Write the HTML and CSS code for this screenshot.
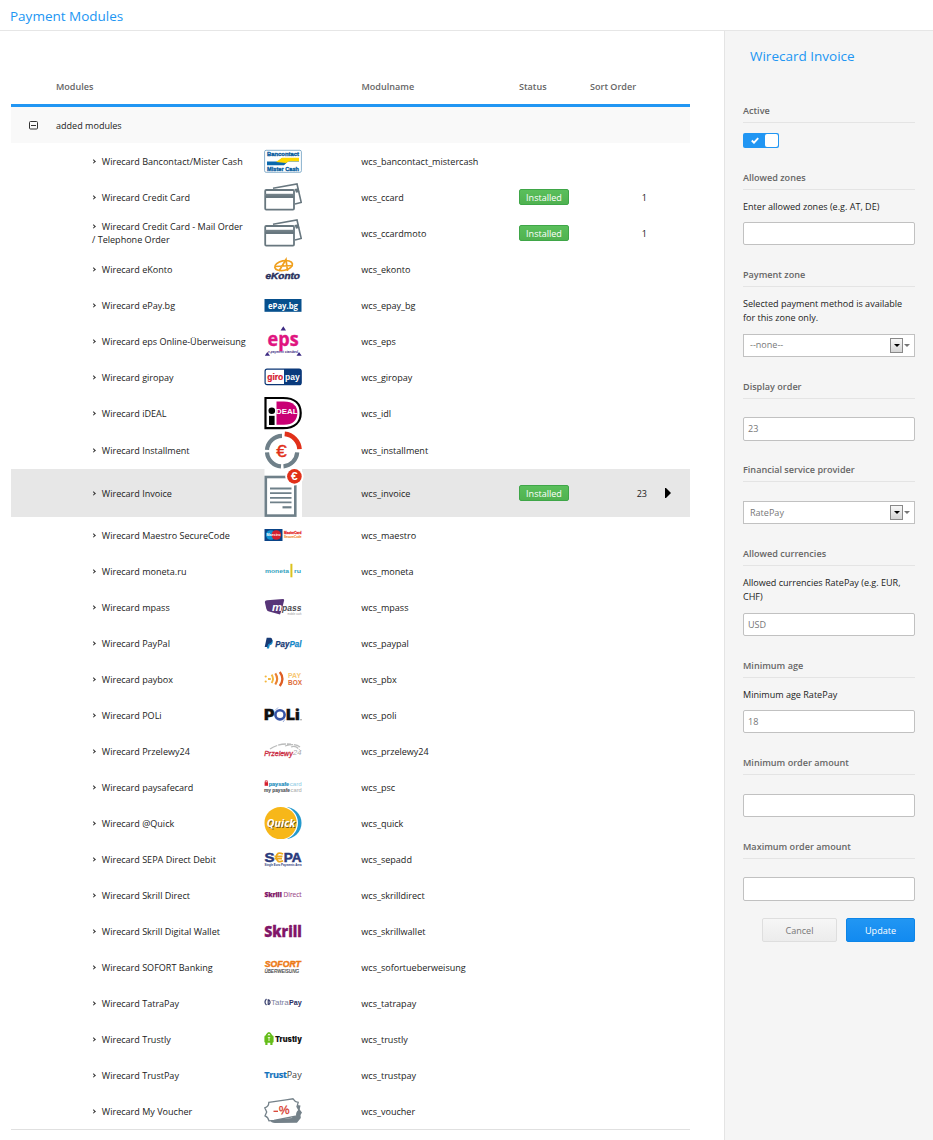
FILE: index.html
```html
<!DOCTYPE html>
<html lang="en">
<head>
<meta charset="utf-8">
<title>Payment Modules</title>
<link rel="stylesheet" href="styles.css">
</head>
<body>
<svg class="defs" width="0" height="0">
  <symbol id="cards" viewBox="0 0 38 36">
    <path d="M9 9.2 33 5 37.2 23.4 31 25" fill="none" stroke="#68777f" stroke-width="1.6"/>
    <path d="M30.5 10 34.5 9.3 35.4 13 32 13.7z" fill="#68777f"/>
    <rect x="1.2" y="11" width="28.8" height="19.6" rx="1" fill="#fff" stroke="#68777f" stroke-width="1.8"/>
    <path d="M1 14.8H30V19H1z" fill="#68777f"/><path d="M1 15.9H30" stroke="#8f9ba1" stroke-width=".5"/>
  </symbol>
</svg>
<header class="page-head"><h1>Payment Modules</h1></header>
<div class="layout">
<main class="main">
  <div class="row head"><span class="c-name">Modules</span><span class="c-mod">Modulname</span><span>Status</span><span>Sort Order</span></div>
  <div class="row group"><svg class="minus" viewBox="0 0 9 9"><rect x=".5" y=".5" width="8" height="7.5" rx="1" fill="none" stroke="#333"/><path d="M2 4.5H7" stroke="#333"/></svg><span>added modules</span></div>

  <div class="row"><span class="name">Wirecard Bancontact/Mister Cash</span>
    <svg class="logo" viewBox="0 0 38 36"><rect x=".6" y="7.3" width="36.8" height="22" rx="1.5" fill="#fff" stroke="#7aa7c6" stroke-width=".9"/><g class="bold" font-size="5.9" fill="#0a5c9e" stroke="#0a5c9e" stroke-width=".35"><text x="3" y="13.3" textLength="32" lengthAdjust="spacingAndGlyphs">Bancontact</text><text x="3" y="27.7" textLength="32" lengthAdjust="spacingAndGlyphs">Mister Cash</text></g><path d="M3 18.5H14L18 15H35V18.4H24L20 22.2H3z" fill="#0b68ac"/><path d="M12 19 18 14.8H35V18.2H25L22 20z" fill="#ffd800"/></svg><span class="mod">wcs_bancontact_mistercash</span></div>
  <div class="row"><span class="name">Wirecard Credit Card</span>
    <svg class="logo"><use href="#cards"/></svg><span class="mod">wcs_ccard</span><span class="status"><b class="badge">Installed</b></span><span class="sort">1</span></div>
  <div class="row"><span class="name">Wirecard Credit Card - Mail Order / Telephone Order</span>
    <svg class="logo"><use href="#cards"/></svg><span class="mod">wcs_ccardmoto</span><span class="status"><b class="badge">Installed</b></span><span class="sort">1</span></div>
  <div class="row"><span class="name">Wirecard eKonto</span>
    <svg class="logo" viewBox="0 0 38 36"><g fill="none" stroke="#f0a01e" stroke-width="1.7"><ellipse cx="19.5" cy="14.5" rx="9" ry="4.8" transform="rotate(-12 20 14)"/><path d="M15 20 22 8.6 23.5 20M11 15.5 29 14.5"/></g><text class="bold it" x="1.5" y="27.6" textLength="34.5" lengthAdjust="spacingAndGlyphs" font-size="8.6" fill="#272f5c" stroke="#272f5c" stroke-width=".4">eKonto</text></svg><span class="mod">wcs_ekonto</span></div>
  <div class="row"><span class="name">Wirecard ePay.bg</span>
    <svg class="logo" viewBox="0 0 38 36"><rect x=".5" y="12" width="37" height="12.8" fill="#07508d"/><text class="open" x="4" y="21.6" textLength="30" lengthAdjust="spacingAndGlyphs" font-size="9.4" font-weight="700" fill="#fff">ePay.bg</text></svg><span class="mod">wcs_epay_bg</span></div>
  <div class="row"><span class="name">Wirecard eps Online-Überweisung</span>
    <svg class="logo" viewBox="0 0 38 36"><text class="open" x="3.6" y="22.6" textLength="31" lengthAdjust="spacingAndGlyphs" font-size="19" font-weight="700" fill="#e0147f" stroke="#e0147f" stroke-width=".4">eps</text><path d="M19.3 3.3 22 7.6H16.6zM3.3 29 6 32.8H.8zM35 29 37.7 32.8H32.5z" fill="#3c2a83"/><text class="bold it" x="4" y="29.8" textLength="30" lengthAdjust="spacingAndGlyphs" font-size="3.6" fill="#3c2a83">e-payment standard</text></svg><span class="mod">wcs_eps</span></div>
  <div class="row"><span class="name">Wirecard giropay</span>
    <svg class="logo" viewBox="0 0 38 36"><rect x="1.1" y="10.2" width="36" height="15.5" rx="2" fill="#fff" stroke="#0a3574" stroke-width="1.2"/><path d="M20 9.9H36Q37.4 10.2 37.4 11.9V23.9Q37.2 25.8 35 25.9H20z" fill="#0a3a7c"/><text class="bold" x="3.3" y="20.6" textLength="16" lengthAdjust="spacingAndGlyphs" font-size="8.5" fill="#d5152d" stroke="#d5152d" stroke-width=".2">giro</text><text class="bold" x="21" y="20.6" textLength="14.6" lengthAdjust="spacingAndGlyphs" font-size="8.5" fill="#fff">pay</text></svg><span class="mod">wcs_giropay</span></div>
  <div class="row"><span class="name">Wirecard iDEAL</span>
    <svg class="logo" viewBox="0 0 38 36"><path d="M1.5 3H19C31 3 36.7 9 36.7 18S31 33.2 19 33.2H1.5z" fill="#fff" stroke="#000" stroke-width="2.2"/><path d="M12.5 6.5H20C29 6.5 33.4 11 33.4 18S29 29.8 20 29.8H12.5z" fill="#c90074"/><circle cx="7.8" cy="15.8" r="3.3"/><path d="M5 20.8H10.6V30H5z"/><text class="bold" x="12" y="18.6" textLength="21.5" lengthAdjust="spacingAndGlyphs" font-size="7.8" fill="#fff">DEAL</text></svg><span class="mod">wcs_idl</span></div>
  <div class="row r-installment"><span class="name">Wirecard Installment</span>
    <svg class="logo" viewBox="0 0 38 38"><g fill="none" stroke-width="4.2"><path d="M18 4.9A15.2 15.2 0 0 0 3 18.9M3 21.4A15.2 15.2 0 0 0 17 35.4M19.5 35.4A15.2 15.2 0 0 0 33.2 21.4" stroke="#6f8089"/><path d="M20.7 2.9A16.3 16.3 0 0 1 35.5 18.2" stroke="#e13019" stroke-width="4.6"/></g><text class="sans" x="12.2" y="26" font-size="16.5" textLength="10.5" lengthAdjust="spacingAndGlyphs" fill="#e13019" stroke="#e13019" stroke-width=".4">€</text></svg><span class="mod">wcs_installment</span></div>
  <div class="row r-invoice"><span class="name">Wirecard Invoice</span>
    <svg class="logo" viewBox="0 0 38 48"><path d="M.5 0H38V48H.5z" fill="#fff"/><rect x="1.8" y="8" width="29.5" height="38.6" fill="#fff" stroke="#6f8089" stroke-width="2.6"/><circle cx="30.4" cy="7.4" r="9.2" fill="#fff"/><circle cx="30.4" cy="7.4" r="7.3" fill="#e13019"/><text class="bold" x="27" y="11.2" font-size="11" textLength="6.7" lengthAdjust="spacingAndGlyphs" fill="#fff">€</text><path d="M6 19.5H27.5M6 24.2H27.5M6 28.8H27.5M6 33.4H27.5" stroke="#6f8089" stroke-width="1.8"/><path d="M18.5 38.3H27.5" stroke="#6f8089" stroke-width="2.2"/></svg><span class="mod">wcs_invoice</span><span class="status"><b class="badge">Installed</b></span><span class="sort">23</span><svg class="arrow" viewBox="0 0 6 10"><path d="M0 0H1L6 5 1 10H0z"/></svg></div>
  <div class="row"><span class="name">Wirecard Maestro SecureCode</span>
    <svg class="logo" viewBox="0 0 38 36"><path d="M.5 12H18.5V24H.5z" fill="#0a4387"/><circle cx="6.8" cy="18" r="4.8" fill="#0f93d2"/><circle cx="12.3" cy="18" r="4.8" fill="#d5202f"/><text class="bold" x="2.5" y="19.4" font-size="4" textLength="14" lengthAdjust="spacingAndGlyphs" fill="#fff">Maestro</text><g class="bold"><text x="20" y="17.3" textLength="17.5" lengthAdjust="spacingAndGlyphs" font-size="4.4" fill="#e52a2d" stroke="#e52a2d" stroke-width=".3">MasterCard</text><text x="20" y="21.3" textLength="17.5" lengthAdjust="spacingAndGlyphs" fill="#f3882e" stroke="#f3882e" stroke-width=".1" font-size="3.8">SecureCode</text></g></svg><span class="mod">wcs_maestro</span></div>
  <div class="row"><span class="name">Wirecard moneta.ru</span>
    <svg class="logo" viewBox="0 0 38 36"><g class="bold" font-size="5.5" fill="#32a1bd"><text x="1" y="20" textLength="24" lengthAdjust="spacingAndGlyphs">moneta</text><text x="30" y="20" textLength="7" lengthAdjust="spacingAndGlyphs">ru</text></g><path d="M27.4 10.8V24.3" stroke="#dcc21e" stroke-width="2"/></svg><span class="mod">wcs_moneta</span></div>
  <div class="row"><span class="name">Wirecard mpass</span>
    <svg class="logo" viewBox="0 0 38 36"><path d="M.8 13Q1 11.4 3 11.3L19 10Q20 10 20.2 11L18 20 16 25.4 6 22.8Q3 22.5 2.4 20z" fill="#583578"/><text class="bold it" x="8" y="21.9" font-size="11" textLength="10" lengthAdjust="spacingAndGlyphs" fill="#fff">m</text><text class="bold it" x="18" y="21.7" font-size="9.4" textLength="19.5" lengthAdjust="spacingAndGlyphs" fill="#4b4b50">pass</text><text class="sans" x="23.5" y="25.8" font-size="2.6" textLength="14" lengthAdjust="spacingAndGlyphs" fill="#999">mobile cash</text></svg><span class="mod">wcs_mpass</span></div>
  <div class="row"><span class="name">Wirecard PayPal</span>
    <svg class="logo" viewBox="0 0 38 36"><path d="M4 15.5 8.7 15Q9.3 19.5 5.7 20.3L5 23.4H2.8z" fill="#1589c8"/><path d="M2.7 12.8H6.6Q9 13.6 7.9 16.6 7 18.9 4.3 19L3.4 22H.7z" fill="#173a75"/><g class="bold it" font-size="8.4" stroke-width=".25"><text x="11.3" y="21.5" textLength="14" lengthAdjust="spacingAndGlyphs" fill="#173a75" stroke="#173a75">Pay</text><text x="25.5" y="21.5" textLength="12" lengthAdjust="spacingAndGlyphs" fill="#1589c8" stroke="#1589c8">Pal</text></g></svg><span class="mod">wcs_paypal</span></div>
  <div class="row"><span class="name">Wirecard paybox</span>
    <svg class="logo" viewBox="0 0 38 36"><circle cx="1.7" cy="15.5" r="1.1" fill="#f4b73e"/><circle cx="1.7" cy="20.5" r="1.1" fill="#f4b73e"/><g fill="none" stroke-width="1.9"><path d="M4 18H6.8M7.6 13.6Q10.4 17.8 7.6 22" stroke="#f4b73e"/><path d="M11.3 12.3Q15 17.7 11.3 23.5" stroke="#ea8130" stroke-width="2.1"/><path d="M15.8 11Q21 17.8 15.8 25" stroke="#de5d23" stroke-width="2.3"/></g><g class="bold" font-size="7.6"><text x="24" y="16.9" textLength="13" lengthAdjust="spacingAndGlyphs" fill="#f7c773">PAY</text><text x="24" y="24.2" textLength="14" lengthAdjust="spacingAndGlyphs" fill="#de6b35">BOX</text></g></svg><span class="mod">wcs_pbx</span></div>
  <div class="row"><span class="name">Wirecard POLi</span>
    <svg class="logo" viewBox="0 0 38 36"><g class="black" font-size="14.5" stroke="#111" stroke-width=".3" fill="#111"><text x="0" y="23.1" textLength="10.5" lengthAdjust="spacingAndGlyphs">P</text><text x="22" y="23.1" textLength="13.8" lengthAdjust="spacingAndGlyphs">Li</text></g><circle cx="16" cy="17.8" r="4.6" fill="none" stroke="#3552a5" stroke-width="2.6"/><path d="M14 10.5 11 13.5M21 22.3 19 25" stroke="#9dadd9"/><circle cx="37" cy="22.8" r=".5"/></svg><span class="mod">wcs_poli</span></div>
  <div class="row"><span class="name">Wirecard Przelewy24</span>
    <svg class="logo" viewBox="0 0 38 36"><path d="M6 16Q15 10 27 11.2M21 13Q31 9.7 36 14M27 14Q32 12 35.5 17" fill="none" stroke="#bbbcbc" stroke-width="1.3" stroke-dasharray="8 1"/><text class="it" x=".2" y="22.9" font-size="7.6" textLength="28.5" lengthAdjust="spacingAndGlyphs" fill="#cb2e45" stroke="#cb2e45" stroke-width=".35">Przelewy</text><text class="it" x="29" y="22.4" font-size="7.6" textLength="8.5" lengthAdjust="spacingAndGlyphs" fill="#aaa">24</text></svg><span class="mod">wcs_przelewy24</span></div>
  <div class="row"><span class="name">Wirecard paysafecard</span>
    <svg class="logo" viewBox="0 0 38 36"><rect x=".6" y="13.2" width="3.4" height="3.6" fill="#d6202f"/><path d="M1.3 13.6V11.8H3.3V13.6" fill="none" stroke="#d6202f" stroke-width=".8"/><g class="bold" font-size="5.2"><text x="4.7" y="16.8" textLength="20.5" lengthAdjust="spacingAndGlyphs" fill="#1c8dbd" stroke="#1c8dbd" stroke-width=".15">paysafe</text><text x="0" y="23" textLength="26" lengthAdjust="spacingAndGlyphs" fill="#4d5256" stroke="#4d5256" stroke-width=".1">my paysafe</text></g><g class="sans" font-size="5.2"><text x="25.7" y="16.8" textLength="12" lengthAdjust="spacingAndGlyphs" fill="#8dcae4">card</text><text x="26.6" y="23" textLength="11.2" lengthAdjust="spacingAndGlyphs" fill="#aaa">card</text></g></svg><span class="mod">wcs_psc</span></div>
  <div class="row"><span class="name">Wirecard @Quick</span>
    <svg class="logo" viewBox="0 0 38 36"><circle cx="21.5" cy="18" r="16" fill="#2499cc"/><circle cx="17" cy="18" r="17" fill="#fff"/><circle cx="16.6" cy="18" r="16.1" fill="#f7b719"/><text class="open quick" x="2.8" y="21.6" font-size="11.4" font-weight="700" font-style="italic" textLength="28.5" lengthAdjust="spacingAndGlyphs" fill="#fff">Quick</text></svg><span class="mod">wcs_quick</span></div>
  <div class="row"><span class="name">Wirecard SEPA Direct Debit</span>
    <svg class="logo" viewBox="0 0 38 36"><g class="bold" font-size="12.6" fill="#29397b" stroke="#29397b" stroke-width=".5"><text x=".5" y="21" textLength="10" lengthAdjust="spacingAndGlyphs">S</text><text x="19.8" y="21" textLength="17.8" lengthAdjust="spacingAndGlyphs">PA</text></g><path d="M19 13Q12.7 10.1 12.3 16.4 12.8 22.6 19 19.8M10.5 15.3H18.5M10.5 17.7H18" fill="none" stroke="#eca91e" stroke-width="1.8"/><text class="bold" x=".5" y="24.8" font-size="3" textLength="37" lengthAdjust="spacingAndGlyphs" fill="#29397b">Single Euro Payments Area</text></svg><span class="mod">wcs_sepadd</span></div>
  <div class="row"><span class="name">Wirecard Skrill Direct</span>
    <svg class="logo" viewBox="0 0 38 36"><text class="open" x=".4" y="20" font-size="6.8" font-weight="800" textLength="17.4" lengthAdjust="spacingAndGlyphs" fill="#811568" stroke="#811568" stroke-width=".25">Skrill</text><text class="open" x="19.6" y="20" font-size="6.6" textLength="18" lengthAdjust="spacingAndGlyphs" fill="#9b4989" stroke="#9b4989" stroke-width=".1">Direct</text></svg><span class="mod">wcs_skrilldirect</span></div>
  <div class="row"><span class="name">Wirecard Skrill Digital Wallet</span>
    <svg class="logo" viewBox="0 0 38 36"><text class="open" x=".2" y="23.9" font-size="15.4" font-weight="800" textLength="37.6" lengthAdjust="spacingAndGlyphs" fill="#811568" stroke="#811568" stroke-width=".3">Skrill</text></svg><span class="mod">wcs_skrillwallet</span></div>
  <div class="row"><span class="name">Wirecard SOFORT Banking</span>
    <svg class="logo" viewBox="0 0 38 36"><text class="bold it" x=".8" y="18.3" font-size="9.6" textLength="36" lengthAdjust="spacingAndGlyphs" fill="#ed7a16" stroke="#ed7a16" stroke-width=".5">SOFORT</text><text class="sans it" x=".5" y="24" font-size="4.9" textLength="34.5" lengthAdjust="spacingAndGlyphs" fill="#464646" stroke="#464646" stroke-width=".15">ÜBERWEISUNG</text></svg><span class="mod">wcs_sofortueberweisung</span></div>
  <div class="row"><span class="name">Wirecard TatraPay</span>
    <svg class="logo" viewBox="0 0 38 36"><path d="M2.5 14Q-.5 17 2.5 20.2M4.2 14.2V20M4.7 14.7Q7.5 17.2 4.7 19.7" fill="none" stroke="#3b426f" stroke-width="1.2"/><text class="sans" x="7" y="19.6" font-size="7.6" textLength="17.7" lengthAdjust="spacingAndGlyphs" fill="#7b7fa0">Tatra</text><text class="bold" x="25" y="19.6" font-size="7.4" textLength="12.7" lengthAdjust="spacingAndGlyphs" fill="#292e61">Pay</text></svg><span class="mod">wcs_tatrapay</span></div>
  <div class="row"><span class="name">Wirecard Trustly</span>
    <svg class="logo" viewBox="0 0 38 36"><path d="M2.7 15V14Q5 9.8 7.2 14V15" fill="none" stroke="#65bd1a" stroke-width="1.6"/><rect x=".4" y="14.3" width="9.2" height="7.4" rx="1.5" fill="#65bd1a"/><path d="M2.4 21V24M7.4 21V24" stroke="#65bd1a" stroke-width="2.2"/><path d="M5 16V20M3.8 16.6H6.2" stroke="#e5f6cd"/><text class="black" x="11" y="20.8" font-size="7.9" textLength="26.8" lengthAdjust="spacingAndGlyphs" fill="#111">Trustly</text></svg><span class="mod">wcs_trustly</span></div>
  <div class="row"><span class="name">Wirecard TrustPay</span>
    <svg class="logo" viewBox="0 0 38 36"><text class="open" x=".3" y="20.6" font-size="9.2" letter-spacing="-.35" font-weight="700" fill="#1473bd" stroke="#1473bd" stroke-width=".2">Trust</text><text class="open" x="22.7" y="20.6" font-size="9.2" textLength="15" lengthAdjust="spacingAndGlyphs" fill="#444">Pay</text></svg><span class="mod">wcs_trustpay</span></div>
  <div class="row"><span class="name">Wirecard My Voucher</span>
    <svg class="logo" viewBox="0 0 38 36"><path d="M33 11Q34.6 12.6 36.5 12.5L35.7 16.5 38 19.5 36.5 22 36.8 25 33 29.8 11 30Q7 30 6 27L28 25z" fill="#748189"/><path d="M4.8 9.4 22 6.8 29 5.8Q31 9 34.2 9.4L33 13.6 35 17.2Q32.2 19.5 32.8 23L10 27.3 5 27.9Q4.2 24 1 22.8L2.7 18.9 .8 14.9Q4.8 13.4 4.8 9.4z" fill="#fff" stroke="#748189" stroke-width="1.3"/><path d="M9.5 18.3H14" stroke="#d84132" stroke-width="1.3"/><text class="sans" x="15" y="21.3" font-size="12" textLength="10.5" lengthAdjust="spacingAndGlyphs" fill="#d84132" stroke="#d84132" stroke-width=".3" transform="rotate(-4 19 18)">%</text></svg><span class="mod">wcs_voucher</span></div>
</main>
<aside class="side">
  <h2>Wirecard Invoice</h2>
  <section class="field"><h3>Active</h3><div class="toggle"><svg viewBox="0 0 8 7"><path d="M.8 3.5 3 5.7 7.2 1.2" fill="none" stroke="#fff" stroke-width="1.9"/></svg><i></i></div></section>
  <section class="field"><h3>Allowed zones</h3><p>Enter allowed zones (e.g. AT, DE)</p><div class="input"></div></section>
  <section class="field"><h3>Payment zone</h3><p>Selected payment method is available<br>for this zone only.</p><div class="input select"><span>--none--</span><i class="drop"></i><i class="caret"></i></div></section>
  <section class="field"><h3>Display order</h3><div class="input">23</div></section>
  <section class="field"><h3>Financial service provider</h3><div class="input select"><span>RatePay</span><i class="drop"></i><i class="caret"></i></div></section>
  <section class="field"><h3>Allowed currencies</h3><p>Allowed currencies RatePay (e.g. EUR,<br>CHF)</p><div class="input">USD</div></section>
  <section class="field"><h3>Minimum age</h3><p>Minimum age RatePay</p><div class="input">18</div></section>
  <section class="field"><h3>Minimum order amount</h3><div class="input"></div></section>
  <section class="field"><h3>Maximum order amount</h3><div class="input"></div></section>
  <div class="actions"><button class="btn">Cancel</button><button class="btn primary">Update</button></div>
</aside>
</div>
</body>
</html>
```
FILE: styles.css
```css
* { box-sizing: border-box; }
body { margin: 0; background: #fff; color: #222; font: 9.05px/13px "Open Sans", sans-serif; height: 1140px; overflow: hidden; }
h1, h2, h3, p { margin: 0; font-weight: 400; }
.defs { display: block; }
.page-head { height: 31px; padding: 7px 10px 0; border-bottom: 1px solid #e6e6e6; }
h1, h2 { font-size: 13.5px; line-height: 18px; color: #2196f3; }
.layout { display: grid; grid-template-columns: 724px 209px; height: 1109px; }

.main { margin: 0 34px 0 11px; padding-top: 38px; }
.row { display: grid; grid-template-columns: 253px 97.3px 157.7px 70px 58px 43px; align-items: center; height: 36px; }
.row:last-child { border-bottom: 1px solid #e0e0e0; height: 37px; }
.row.head { grid-template-columns: 45px 305.5px 157.5px 71px 100px; height: 38px; border-bottom: 3px solid #2196f3; font-weight: 600; color: #666; }
.head .c-name { grid-column: 2; }
.row.group { grid-template-columns: 45px 1fr; background: #f9f9f9; }
.minus { width: 9px; height: 9px; margin-left: 18px; }
.name { padding-left: 81px; padding-right: 16px; }
.name::before { content: ""; display: inline-block; box-sizing: content-box; width: 2.2px; height: 2.2px; margin: 0 7px 1.4px -.4px; border: solid #333; border-width: 1px 1px 0 0; transform: rotate(45deg); }
.logo { width: 38px; height: 36px; display: block; overflow: visible; }
.bold { font-family: "Liberation Sans", sans-serif; font-weight: 700; }
.sans { font-family: "Liberation Sans", sans-serif; }
.it { font-family: "Liberation Sans", sans-serif; font-style: italic; }
.black { font-family: Inter, sans-serif; font-weight: 900; }
.open { font-family: "Open Sans", sans-serif; }
.quick { text-shadow: .7px 1px .6px #6b531d; }
.badge { display: block; width: 50px; height: 16px; border: 1px solid #3fa648; border-radius: 2px; background: linear-gradient(#5abf5b, #50b250); color: #fff; font-weight: 400; line-height: 15px; text-align: center; }
.sort { text-align: right; }
.r-installment { height: 38px; }
.r-installment .logo { height: 38px; }
.r-invoice { height: 48px; background: #e7e7e7; }
.r-invoice .logo { height: 48px; }
.arrow { width: 6px; height: 10px; margin-left: 18px; }

.side { background: #f5f5f5; border-left: 1px solid #e4e4e4; padding: 16px 18px 0; }
.side h2 { padding-left: 7px; height: 33.8px; }
.field { display: flex; flex-direction: column; }
.field h3 { display: flex; align-items: flex-end; height: 41.8px; margin-bottom: 10px; padding-bottom: 4px; border-bottom: 1px solid #e4e4e4; font-size: 9.08px; font-weight: 600; color: #666; line-height: 14px; }
.field p { line-height: 14.3px; margin-bottom: -.4px; }
.input { height: 23.4px; margin-top: 8.4px; padding: 0 4px; border: 1px solid #c1c1c1; border-radius: 2px; background: #fff; color: #777; line-height: 22px; }
.toggle { display: flex; align-items: center; width: 36px; height: 15px; margin-bottom: .2px; padding: 1px; border-radius: 2px; background: #2196f3; }
.toggle svg { width: 8px; height: 7px; margin: 0 6px 0 7px; }
.toggle i { width: 13px; height: 13px; border-radius: 2px; background: #fff; }
.select { display: flex; align-items: center; padding: 0 4px 0 6px; border-radius: 0; }
.select span { flex: 1; }
.drop { display: flex; align-items: center; justify-content: center; width: 13px; height: 15px; border: 1px solid #888; background: linear-gradient(#f8f8f8, #d5d5d5); }
.drop::after { content: ""; border: 3px solid transparent; border-top-color: #000; border-bottom: 0; }
.caret { margin-left: 1px; border: 3px solid transparent; border-top: 3px solid #777; border-bottom: 0; }
.actions { display: flex; justify-content: flex-end; gap: 9px; margin-top: 17.5px; }
.btn { width: 75px; height: 24px; padding: 0; border: 1px solid #dedede; border-radius: 2px; background: linear-gradient(#f6f6f6, #ececec); color: #777; font: inherit; }
.primary { width: 69px; border-color: #0d85e8; background: linear-gradient(#2196f3, #128af0); color: #fff; }
```
